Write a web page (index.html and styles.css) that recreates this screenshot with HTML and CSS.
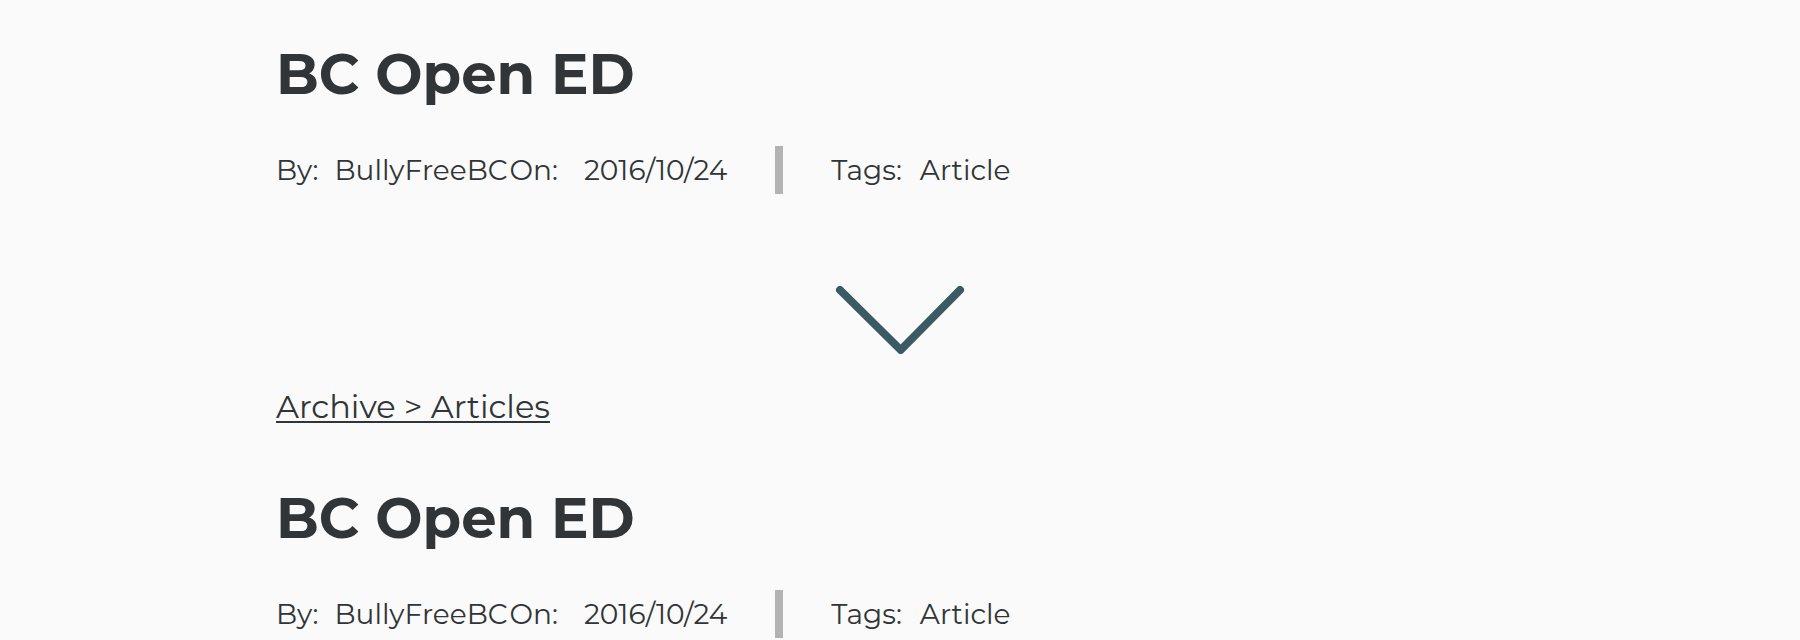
FILE: index.html
```html
<!DOCTYPE html>
<html lang="en">
<head>
<meta charset="utf-8">
<title>BC Open ED</title>
<link rel="stylesheet" href="styles.css">
</head>
<body>
<main class="page">
  <header class="intro">
    <h1 class="title">BC Open ED</h1>
    <div class="meta">
      <div class="group"><span class="label">By:</span><span class="author">BullyFreeBC</span><span class="on">On:</span><time datetime="2016-10-24">2016/10/24</time></div>
      <div class="group tags"><span class="label">Tags:</span><span>Article</span></div>
    </div>
  </header>
  <svg class="chevron" viewBox="0 0 128 68" aria-hidden="true"><path d="M4 4 64.700 64 124 4"/></svg>
  <a class="crumb" href="#">Archive &gt; Articles</a>
  <article class="intro">
    <h2 class="title">BC Open ED</h2>
    <div class="meta">
      <div class="group"><span class="label">By:</span><span class="author">BullyFreeBC</span><span class="on">On:</span><time datetime="2016-10-24">2016/10/24</time></div>
      <div class="group tags"><span class="label">Tags:</span><span>Article</span></div>
    </div>
  </article>
</main>
</body>
</html>
```
FILE: styles.css
```css
body {
  margin: 0;
  background: #fafafa;
  color: #313537;
  font-family: Montserrat, Inter, sans-serif;
  font-weight: 400;
  overflow-x: hidden;
}
.page {
  display: flex;
  flex-direction: column;
  max-width: 1248px;
  margin: 0 auto;
  padding-top: 40px;
}
.title {
  margin: 0;
  font-size: 56px;
  line-height: 68px;
  font-weight: 700;
}
.meta {
  display: flex;
  flex-wrap: wrap;
  margin-top: 38px;
  font-size: 28px;
  line-height: 48px;
}
.group {
  display: flex;
}
.label {
  margin-right: 16px;
}
.on {
  margin-left: 2px;
  margin-right: 26px;
}
.tags {
  margin-left: 48px;
  padding-left: 48px;
  border-left: 8px solid #b3b3b3;
}
.tags .label {
  margin-right: 18px;
}
.chevron {
  align-self: center;
  width: 128px;
  margin-top: 92px;
  fill: none;
  stroke: #3b5a63;
  stroke-width: 8;
  stroke-linecap: round;
  stroke-linejoin: round;
}
.crumb {
  align-self: flex-start;
  margin: 33px 0 57px;
  color: inherit;
  font-size: 32px;
  line-height: 40px;
  text-underline-offset: 3px;
  text-decoration-thickness: 2px;
}
```
